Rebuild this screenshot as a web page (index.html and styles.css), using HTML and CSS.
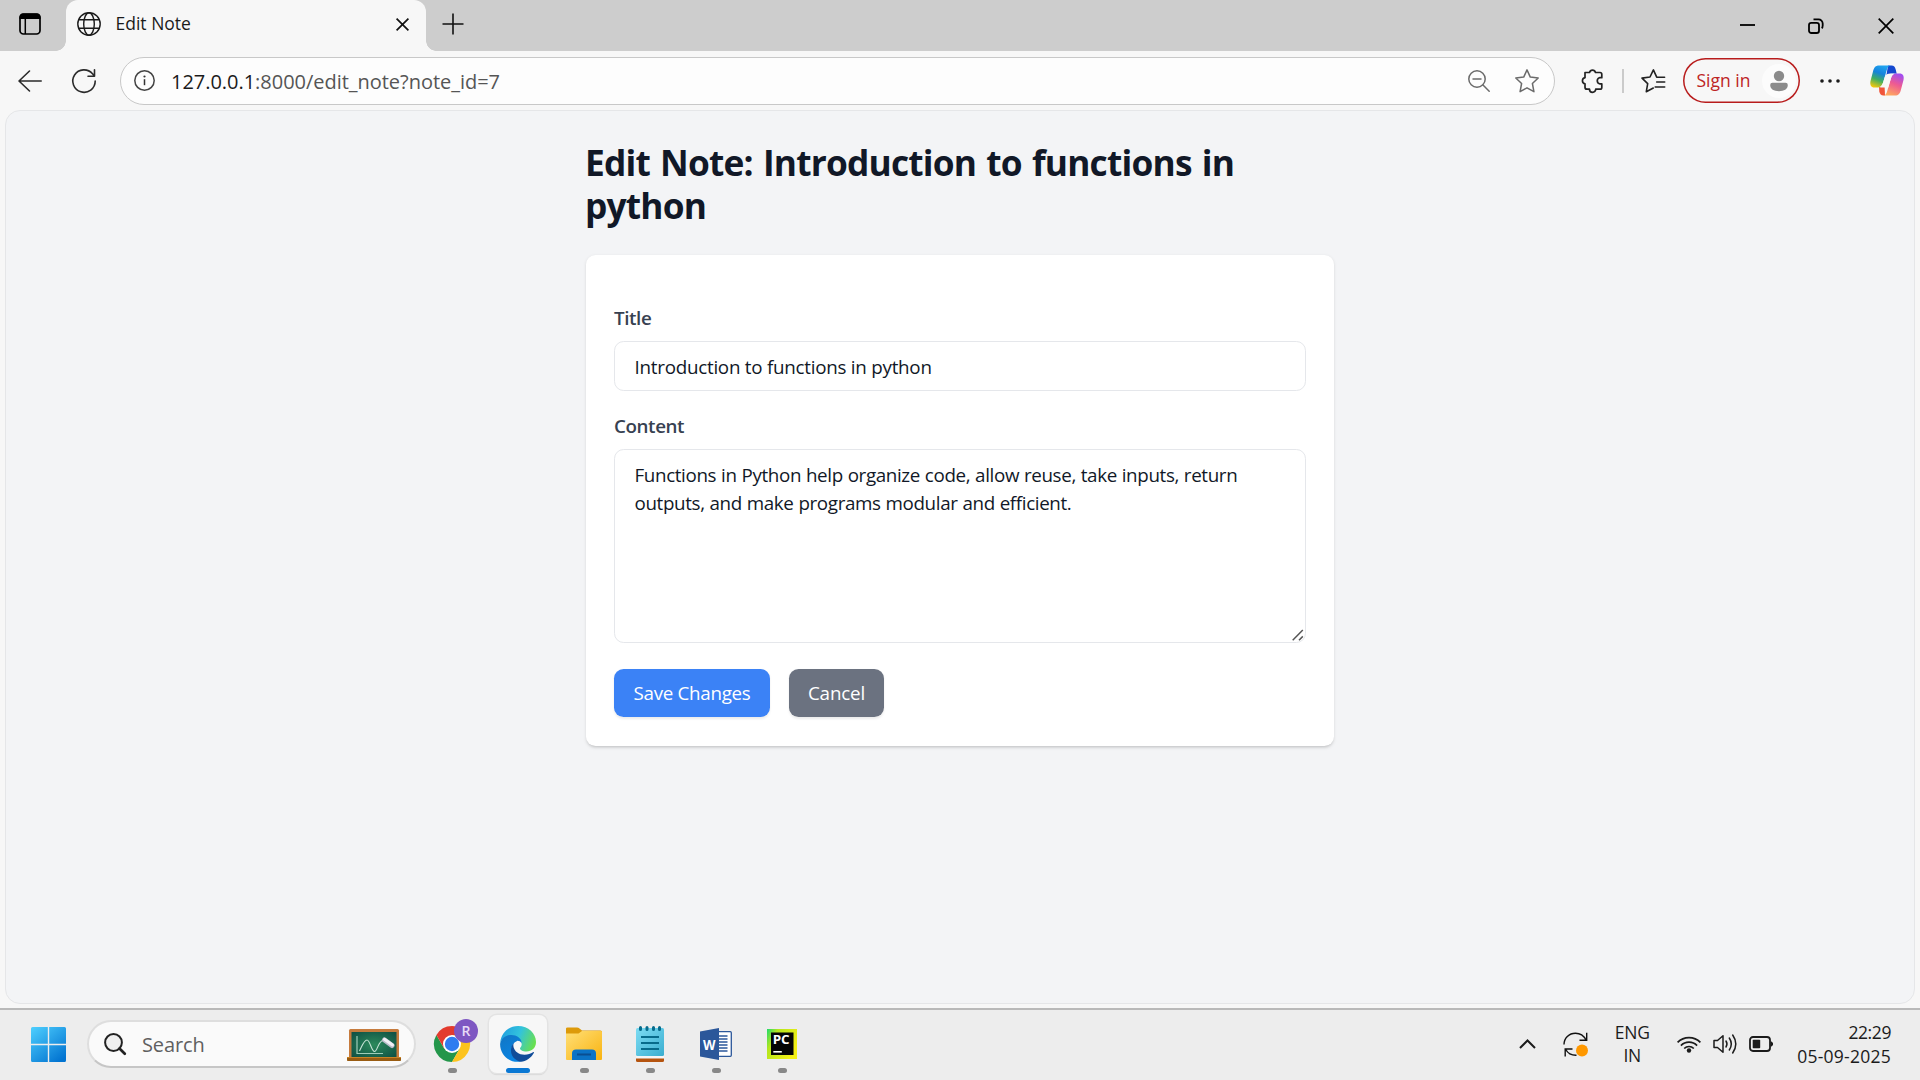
FILE: index.html
```html
<!DOCTYPE html>
<html lang="en">
<head>
<meta charset="utf-8">
<title>Edit Note</title>
<link rel="stylesheet" href="styles.css">
</head>
<body>
<header class="tabstrip">
  <svg class="tab-menu" width="22" height="22" viewBox="0 0 22 22"><rect x="1" y="1" width="20" height="20" rx="3.5" fill="none" stroke="#000" stroke-width="1.7"/><path d="M.6 6V4A3.5 3.5 0 0 1 4 .5h14A3.5 3.5 0 0 1 21.500 4v2z"/><path d="M6.300 5v16" stroke="#000" stroke-width="1.500"/></svg>
  <div class="tab">
    <svg class="globe" width="24" height="24" viewBox="0 0 24 24" fill="none" stroke="#1b1b1b" stroke-width="1.400"><circle cx="12" cy="12" r="11.200"/><ellipse cx="12" cy="12" rx="5.300" ry="11.200"/><path d="M1.800 7.700h20.400M1.800 16.300h20.400"/></svg>
    <span class="tab-title">Edit Note</span>
    <svg class="tab-close" width="13" height="13" viewBox="0 0 13 13" stroke="#111" stroke-width="1.700"><path d="M.6.6l11.800 11.800M12.400.6.6 12.400"/></svg>
  </div>
  <svg class="tab-new" width="22" height="22" viewBox="0 0 22 22" stroke="#111" stroke-width="1.600"><path d="M11 .5v21M.5 11h21"/></svg>
  <div class="window-buttons">
    <svg width="15" height="15" viewBox="0 0 15 15"><path d="M0 7h15" stroke="#000" stroke-width="1.800"/></svg>
    <svg width="16" height="16" viewBox="0 0 16 16" fill="none" stroke="#000" stroke-width="1.800"><rect x="1" y="4.800" width="10" height="10.200" rx="2.300"/><path d="M5.500 1.300H10.500A4.200 4.200 0 0 1 14.700 5.500V7.500Q14.700 9.500 13.700 10.300"/></svg>
    <svg width="16" height="16" viewBox="0 0 16 16"><path d="M.7.7l14.600 14.600M15.300.7.7 15.300" stroke="#000" stroke-width="1.700"/></svg>
  </div>
</header>

<nav class="toolbar">
  <svg class="back" width="24" height="22" viewBox="0 0 24 22" fill="none" stroke="#2b2b2b" stroke-width="1.600" stroke-linecap="round" stroke-linejoin="round"><path d="M11.500 1 1 11l10.500 10M1.500 11H23.200"/></svg>
  <svg class="reload" width="24" height="24" viewBox="0 0 24 24" fill="none" stroke="#2b2b2b" stroke-width="1.600" stroke-linecap="round" stroke-linejoin="round"><path d="M23.200 12A11.200 11.200 0 1 1 20.500 4.800L22.400 7M22.500.8V7.300H16"/></svg>
  <div class="address">
    <svg class="info" width="21" height="21" viewBox="0 0 21 21"><circle cx="10.500" cy="10.500" r="9.700" fill="none" stroke="#444" stroke-width="1.500"/><circle cx="10.500" cy="6.500" r="1.100" fill="#333"/><path d="M10.500 9.200v6" stroke="#333" stroke-width="1.500"/></svg>
    <span class="url"><b>127.0.0.1</b>:8000/edit_note?note_id=7</span>
    <svg class="zoom-out" width="22" height="22" viewBox="0 0 22 22" fill="none" stroke="#6b6b6b" stroke-width="1.500" stroke-linecap="round"><circle cx="9" cy="9" r="8.200"/><path d="M5 9h8M15 15l6.200 6.200"/></svg>
    <svg class="star" width="24" height="24" viewBox="0 0 24 24" fill="none" stroke="#6b6b6b" stroke-width="1.500" stroke-linejoin="round"><path d="M12 .9l3.300 7.200 7.900.9-5.800 5.500 1.500 8.200L12 18.800l-6.900 3.900 1.500-8.200L.8 9l7.900-.9z"/></svg>
  </div>
  <svg class="puzzle" width="24" height="24" viewBox="0 0 24 24" fill="none" stroke="#222" stroke-width="1.700" stroke-linejoin="round"><path d="M5 3.500H9.500A3.100 3.100 0 0 1 15.500 3.500H20Q21.800 3.500 21.800 5.500V8.700H19.500A3.200 3.200 0 0 0 19.500 14.800H21.800V18.500Q21.800 20.200 20 20.200H15.700A3.100 3.100 0 0 1 9.500 20.200H7Q5 20.200 5 18.200V14.800A3.100 3.100 0 0 1 5 8.700Z"/></svg>
  <span class="divider"></span>
  <svg class="favorites" width="25" height="24" viewBox="0 0 25 24" fill="none" stroke="#222" stroke-width="1.600" stroke-linejoin="round" stroke-linecap="round"><path d="M23.600 8.200H15.700L12.400.9 9 8 1 9.100l5.700 5.500-1.400 8.100L12.300 19M15.700 13h8M14.200 18h9.500"/></svg>
  <div class="signin"><span>Sign in</span><svg width="34" height="34" viewBox="0 0 34 34"><circle cx="17" cy="17" r="17" fill="#fcfcfc"/><g fill="#8b8b8b"><circle cx="17" cy="12" r="5.200"/><path d="M10.500 18.700h13a2.300 2.300 0 0 1 2.300 2.300c0 4.100-3.800 6.200-8.800 6.200S8.200 25.100 8.200 21a2.300 2.300 0 0 1 2.300-2.300z"/></g></svg></div>
  <svg class="more" width="20" height="4" viewBox="0 0 20 4" fill="#1b1b1b"><circle cx="2" cy="2" r="1.800"/><circle cx="10" cy="2" r="1.800"/><circle cx="18" cy="2" r="1.800"/></svg>
  <svg class="copilot" width="34" height="31" viewBox="0 0 34 31">
    <defs>
      <linearGradient id="cpa" x1=".6" y1="0" x2=".25" y2="1"><stop offset="0" stop-color="#1fa4f0"/><stop offset=".35" stop-color="#1583dc"/><stop offset=".65" stop-color="#3fae62"/><stop offset="1" stop-color="#f2c70c"/></linearGradient>
      <linearGradient id="cpb" x1=".7" y1="0" x2=".3" y2="1"><stop offset="0" stop-color="#a24df0"/><stop offset=".45" stop-color="#ee5a92"/><stop offset="1" stop-color="#ffab5c"/></linearGradient>
    </defs>
    <path d="M18 .5h3.500c2.500 0 3.500 1.500 4.200 4l1 4.200h-5.200c-3 0-4.500 1-5.500 4z" fill="#1448cf"/>
    <path d="M9 22l5.500-3 .5 11.500h-1.500c-2.500 0-3.500-1.500-4.200-3.800z" fill="#f0553a"/>
    <path d="M9 .5h12c-2.500 0-3.500 2-4.300 4.800l-3.600 12.200c-1 3.300-2.300 5-5.300 5H4.500C1 22.500-.3 19.800.5 16L3 6.500C4 2.500 5.500.5 9 .5z" fill="url(#cpa)"/>
    <path d="M25 30.500H13c2.500 0 3.500-2 4.300-4.800L20.900 13.500c1-3.300 2.300-5 5.300-5h3.300c3.500 0 4.800 2.700 4 6.500L31 24.500c-1 4-2.500 6-6 6z" fill="url(#cpb)"/>
    <path d="M20.500 8.500h5.700c-3 0-4.300 1.700-5.300 5l-2.600 9h-5.500c-1.500 0-2.500 0-3.300-.6 1.700-.6 2.700-2.100 3.600-4.400l1.700-5.500c.9-2.500 2.700-3.500 5.700-3.500z" fill="#f7f7f7"/>
  </svg>
</nav>

<main class="viewport">
  <div class="container">
    <h1>Edit Note: Introduction to functions in python</h1>
    <form class="card">
      <label for="title">Title</label>
      <input id="title" type="text" value="Introduction to functions in python">
      <label for="content">Content</label>
      <div class="area">
        <textarea id="content" spellcheck="false">Functions in Python help organize code, allow reuse, take inputs, return outputs, and make programs modular and efficient.</textarea>
        <svg class="grip" width="12" height="12" viewBox="0 0 12 12" stroke="#555" stroke-width="1.500"><path d="M.7 11.200 10.800 1M7 11.200 10.800 7.400"/></svg>
      </div>
      <div class="actions">
        <button type="button" class="btn save">Save Changes</button>
        <button type="button" class="btn cancel">Cancel</button>
      </div>
    </form>
  </div>
</main>

<footer class="taskbar">
  <svg class="start" width="35" height="35" viewBox="0 0 35 35">
    <defs><linearGradient id="win" gradientUnits="userSpaceOnUse" x1="0" y1="0" x2="28" y2="35"><stop offset="0" stop-color="#4fd0ff"/><stop offset="1" stop-color="#0274d1"/></linearGradient></defs>
    <path fill="url(#win)" d="M1.500 0H16.800V16.800H0V1.500Q0 0 1.500 0zM18.200 0H33.500Q35 0 35 1.500V16.800H18.200zM0 18.200H16.800V35H1.500Q0 35 0 33.500zM18.200 18.200H35V33.500Q35 35 33.500 35H18.200z"/>
  </svg>
  <div class="search">
    <svg class="mag" width="23" height="23" viewBox="0 0 23 23" stroke="#222" fill="none"><circle cx="9.500" cy="9.500" r="8.400" fill="#f0f0f0" stroke-width="2"/><path d="M15.500 15.500l5.300 5.300" stroke-width="2.700" stroke-linecap="round"/></svg>
    <span>Search</span>
    <svg class="board" width="54" height="32" viewBox="0 0 54 32">
      <defs><radialGradient id="chalk" cx=".5" cy=".5" r=".65"><stop offset="0" stop-color="#2b8a5c"/><stop offset="1" stop-color="#115245"/></radialGradient></defs>
      <rect x="2" width="50" height="30" rx="1.500" fill="#c67b3d"/><rect x="4.500" y="3" width="45" height="25.500" fill="url(#chalk)"/>
      <path d="M10 7v17.500h26" fill="none" stroke="#9fcdb9" stroke-width="1.200"/><path d="M12.500 22c3-6 4.500-11 7.500-11s4.500 11.500 7.500 11.500S31 12 36 11.500" fill="none" stroke="#c6e3d6" stroke-width="1.100"/>
      <path d="M37.500 11l7.500 5.500" stroke="#b9bcc9" stroke-width="5" stroke-linecap="round"/><path d="M37.500 10.300l8 5.700" stroke="#f1f1f6" stroke-width="3" stroke-linecap="round"/>
      <rect y="28" width="54" height="4" rx=".8" fill="#995c12"/><path d="M0 28.500h54" stroke="#c98324"/>
    </svg>
  </div>

  <div class="apps">
    <div class="app">
      <svg width="36" height="36" viewBox="0 0 36 36"><path d="M18 18 2.400 9A18 18 0 0 1 33.600 9z" fill="#e33b2e"/><path d="M2.400 9A18 18 0 0 0 18 36L25.800 22.500 10.200 22.500z" fill="#23964a"/><path d="M33.600 9A18 18 0 0 1 18 36L25.800 22.500 18 9z" fill="#fcc31e"/><path d="M2.400 9 10.200 22.500 18 9z" fill="#e33b2e"/><circle cx="18" cy="18" r="9" fill="#fff"/><circle cx="18" cy="18" r="7.200" fill="#2f7cf0"/></svg>
      <span class="profile">R</span>
      <i></i>
    </div>
    <div class="app active">
      <svg width="36" height="36" viewBox="0 0 36 36">
        <defs>
          <linearGradient id="eg1" x1="0" y1=".3" x2="1" y2=".6"><stop offset="0" stop-color="#1f9fe0"/><stop offset=".5" stop-color="#33c3dc"/><stop offset="1" stop-color="#6ae04d"/></linearGradient>
          <linearGradient id="eg2" x1="0" y1="0" x2=".5" y2="1"><stop offset="0" stop-color="#1276c4"/><stop offset="1" stop-color="#0a84e2"/></linearGradient>
        </defs>
        <path d="M.2 17C1 7 8.500 0 18 0c10.500 0 18 7.500 18 16 0 6-4.500 9.500-9.500 9.500-4 0-6.500-1.500-6.500-3 0-1 1.700-1.700 1.700-4.300 0-4.500-4.700-8.200-10.500-8.200C5.500 10 1.500 13 .2 17z" fill="url(#eg1)"/>
        <path d="M.1 18C1 12.500 5.500 9 11.500 9c5 0 10.200 3 10.200 8.500-1-2-2.500-2.700-4.200-2.700-5 2-6.500 6.500-5.500 11 1 5 5 9 9.500 9.600C10 38 0 29 .1 18z" fill="url(#eg2)"/>
        <path d="M17 14.800c-3 1-4.200 3.200-3.500 6.200 1 4.500 5.500 7.700 11 7.700 3.500 0 6-1 8.500-2.500.8-.4 1.200.1.8.8C30.500 32.500 26 35.500 21 35.700c-6-1-10.300-6-10-12 .2-4 2.500-7.500 6-8.900z" fill="#104c99"/>
      </svg>
      <i></i>
    </div>
    <div class="app">
      <svg width="36" height="34" viewBox="0 0 36 34"><defs><linearGradient id="fo" x1="0" y1="0" x2="1" y2="1"><stop offset="0" stop-color="#ffdf77"/><stop offset="1" stop-color="#f9b310"/></linearGradient></defs><path d="M0 8V1.500Q0 .5 1.500.5H11q1.500 0 2.500 1L16 3.500h18.500Q36 3.500 36 5v3z" fill="#dd9a0a"/><path d="M0 6.500h12.500L16 4h19q1 0 1 1v27q0 1-1 1H1q-1 0-1-1z" fill="url(#fo)"/><path d="M6 33v-6.500Q6 22.500 10 22.500H26q4 0 4 4V33z" fill="#0b73c6"/><path d="M11 27.500h14" stroke="#0a4e91" stroke-width="2"/></svg>
      <i></i>
    </div>
    <div class="app">
      <svg width="28" height="36" viewBox="0 0 28 36"><defs><linearGradient id="np" x1="0" y1="0" x2="1" y2="1"><stop offset="0" stop-color="#7ddcf3"/><stop offset="1" stop-color="#3aaed0"/></linearGradient></defs><rect y="27" width="28" height="9" rx="1.500" fill="#b5540f"/><rect y="26" width="28" height="6.500" fill="#f5f5f5"/><rect y="2" width="28" height="28" rx="1.500" fill="url(#np)"/><path d="M5 11h18M5 17h18M5 23h18" stroke="#076b8b" stroke-width="2"/><path d="M4.500 1.500v2M11 1.500v2M17.500 1.500v2M23.500 1.500v2" stroke="#076b8b" stroke-width="3" stroke-linecap="round"/></svg>
      <i></i>
    </div>
    <div class="app">
      <svg width="32" height="32" viewBox="0 0 32 32"><rect x="16" y="3.700" width="15.300" height="24.600" rx="1" fill="#fff" stroke="#2b579a" stroke-width="1.300"/><path d="M19 8h8.500M19 11h8.500M19 14h8.500M19 17h8.500M19 20h8.500M19 23h8.500" stroke="#2b579a" stroke-width="1.300"/><path d="M0 3.500 19 0v32L0 28.500z" fill="#2b579a"/><text x="9.300" y="21.700" class="glyph" font-size="15" text-anchor="middle" textLength="12.500" lengthAdjust="spacingAndGlyphs">W</text></svg>
      <i></i>
    </div>
    <div class="app">
      <svg width="30" height="30" viewBox="0 0 30 30"><defs><linearGradient id="pc" x1="0" y1="0" x2="1" y2=".5"><stop offset="0" stop-color="#1edb6d"/><stop offset=".3" stop-color="#b5e61d"/><stop offset="1" stop-color="#f3ef16"/></linearGradient></defs><rect width="30" height="30" fill="url(#pc)"/><rect x="4" y="3.500" width="22.500" height="22.500" fill="#050505"/><text x="14.200" y="15" class="glyph" font-size="12" text-anchor="middle" textLength="17" lengthAdjust="spacingAndGlyphs">PC</text><path d="M6.300 22.800h8.500" stroke="#fff" stroke-width="1.600"/></svg>
      <i></i>
    </div>
  </div>

  <div class="tray">
    <svg width="17" height="10" viewBox="0 0 17 10" fill="none" stroke="#1b1b1b" stroke-width="2"><path d="M1 9 8.500 1.500 16 9"/></svg>
    <svg class="sync" width="26" height="25" viewBox="0 0 26 25" fill="none" stroke="#111" stroke-width="1.400"><path d="M1 12.500C1 6 6 1.200 12.500 1.200 17.500 1.200 21 4 23 8M23.700.8V8.200H16.500M2.200 24.500V17H9.500M2.700 17.500C5 21.500 9 23.500 13.500 23.300"/><circle cx="19" cy="18.500" r="6" fill="#ff9800" stroke="none"/></svg>
    <div class="lang">ENG<br><span>IN</span></div>
    <svg class="wifi" width="24" height="18" viewBox="0 0 24 18" fill="none" stroke="#1b1b1b" stroke-width="1.700"><path d="M.6 7.300a16 16 0 0 1 22.800 0M3.900 10.600a11.400 11.400 0 0 1 16.200 0M7.200 13.500a6.800 6.800 0 0 1 9.600 0"/><circle cx="12" cy="15.500" r="2.200" fill="#1b1b1b" stroke="none"/></svg>
    <svg class="volume" width="24" height="20" viewBox="0 0 24 20" fill="none" stroke="#1b1b1b" stroke-width="1.500" stroke-linejoin="round" stroke-linecap="round"><path d="M1 6.500H4.500L10 1.700V18.300L4.500 13.500H1zM13 7q2 3 0 6M16.300 4q4 6 0 12M19.700 1q6.200 9 0 18"/></svg>
    <svg class="battery" width="25" height="16" viewBox="0 0 25 16"><rect x="1" y="1" width="20" height="14" rx="3" fill="none" stroke="#1b1b1b" stroke-width="1.800"/><rect x="3.700" y="3.800" width="7.500" height="8.400" rx=".8" fill="#1b1b1b"/><path d="M21.500 5.500h1l1.500 1.500v2l-1.500 1.500h-1z" fill="#1b1b1b"/></svg>
    <div class="clock"><span class="time">22:29</span><br>05-09-2025</div>
  </div>
</footer>
</body>
</html>
```
FILE: styles.css
```css
* { box-sizing: border-box; }
body {
  margin: 0;
  width: 1920px;
  height: 1080px;
  overflow: hidden;
  display: flex;
  flex-direction: column;
  background: #f7f7f7;
  font-family: "Open Sans", "Noto Sans", sans-serif;
}
svg { display: block; flex: none; overflow: visible; }

/* Tab strip */
.tabstrip { display: flex; height: 51px; background: #cdcdcd; align-items: flex-start; }
.tab-menu { margin: 13px 25px 0 19px; }
.tab {
  position: relative;
  display: flex;
  width: 360px;
  height: 51px;
  padding: 0 17px 0 11px;
  border-radius: 12px 12px 0 0;
  background: #f7f7f7;
}
.tab::before, .tab::after {
  content: "";
  position: absolute;
  bottom: 0;
  width: 10px;
  height: 10px;
}
.tab::before { left: -10px; background: radial-gradient(circle at 0 0, transparent 9.5px, #f7f7f7 10px); }
.tab::after { right: -10px; background: radial-gradient(circle at 100% 0, transparent 9.5px, #f7f7f7 10px); }
.globe { margin-top: 12px; }
.tab-title { flex: 1; margin: 11px 0 0 14.5px; font-size: 17.5px; line-height: 24px; color: #1b1b1b; }
.tab-close { margin-top: 18px; }
.tab-new { margin: 12.5px 0 0 15.5px; }
.window-buttons { display: flex; align-items: center; gap: 53.5px; margin: 17.5px 26.5px 0 auto; }

/* Toolbar */
.toolbar { display: flex; flex: none; height: 59px; align-items: center; padding-left: 18px; }
.reload { margin-left: 30px; }
.address {
  display: flex;
  align-items: center;
  width: 1435px;
  height: 48px;
  margin-left: 24px;
  padding: 0 15px 0 12.5px;
  border: 1px solid #c8c8c8;
  border-radius: 24px;
  background: #fdfdfd;
}
.url { flex: 1; margin: 1px 0 0 16.5px; font-size: 20px; letter-spacing: -0.03px; color: #555; }
.url b { font-weight: 400; color: #1b1b1b; }
.star { margin-left: 25px; }
.puzzle { margin-left: 25px; }
.divider { width: 2px; height: 24px; margin-left: 18px; background: #cbcbcb; }
.favorites { margin-left: 16.5px; }
.signin {
  display: flex;
  align-items: center;
  justify-content: space-between;
  width: 117px;
  height: 45px;
  margin-left: 17.5px;
  padding: 0 4px 0 13.5px;
  border-radius: 23px;
  box-shadow: inset 0 0 0 1.5px #b81c1c;
  font-size: 17.5px;
  color: #bd2424;
}
.signin span { margin-top: -1px; }
.more { margin-left: 20px; }
.copilot { margin-left: 30px; }

/* Page */
.viewport {
  flex: none;
  width: 1910px;
  height: 894px;
  margin-left: 5px;
  padding-top: 30px;
  border: 1px solid #e5e6e8;
  border-radius: 15px;
  background: #f3f4f6;
}
.container { width: 748px; margin: 0 auto; }
h1 {
  margin: 0 0 27.600px -1px;
  font-size: 35.300px;
  line-height: 43.200px;
  font-weight: 700;
  letter-spacing: -0.8px;
  word-spacing: 1.7px;
  color: #111827;
}
.card {
  display: flex;
  flex-direction: column;
  height: 491px;
  padding: 49px 28px 0;
  border-radius: 9.600px;
  background: #fff;
  box-shadow: 0 1.200px 3.600px rgba(0, 0, 0, .1), 0 1.200px 2.400px -1px rgba(0, 0, 0, .1);
}
label {
  height: 29px;
  margin-bottom: 8px;
  font-size: 18.800px;
  line-height: 29px;
  font-weight: 600;
  letter-spacing: -0.400px;
  color: #374151;
}
input, textarea {
  display: block;
  width: 100%;
  margin: 0;
  border: 1px solid #e5e7eb;
  border-radius: 9.600px;
  background: #fff;
  font-family: inherit;
  font-size: 18.800px;
  line-height: 28.800px;
  color: #111827;
  outline: none;
}
input { flex: none; height: 50px; margin-bottom: 21px; padding: 1px 19.500px 0; letter-spacing: -0.25px; }
.area { position: relative; height: 194px; }
textarea { height: 194px; padding: 11px 19.500px; line-height: 28px; resize: none; letter-spacing: -0.36px; word-spacing: .35px; overflow: hidden; }
.grip { position: absolute; right: 2px; bottom: 2px; }
.actions { display: flex; gap: 19px; margin-top: 26px; }
.btn {
  height: 48px;
  padding: 0;
  border: 0;
  border-radius: 9.600px;
  font-family: inherit;
  font-size: 18.800px;
  color: #fff;
  box-shadow: 0 1.200px 2.400px rgba(0, 0, 0, .08);
}
.save { width: 156px; background: #3b82f6; letter-spacing: -0.3px; }
.cancel { width: 95px; background: #6b7280; letter-spacing: -0.165px; }

/* Taskbar */
.taskbar {
  display: flex;
  flex: none;
  align-items: center;
  height: 72px;
  margin-top: 4px;
  border-top: 2px solid #b9b9b9;
  background: #ededed;
}
.start { margin: -1px 0 0 31px; }
.search {
  display: flex;
  align-items: center;
  width: 329px;
  height: 48px;
  margin: -2px 0 0 20.5px;
  padding: 0 13px 0 15.5px;
  border: 2px solid #dedede;
  border-bottom-color: #c6c6c6;
  border-radius: 24px;
  background: #fafafa;
  font-size: 20px;
  letter-spacing: -0.113px;
  color: #5f5f5f;
}
.search span { flex: 1; margin-left: 15px; }
.board { margin-top: 2px; }
.apps { display: flex; align-self: stretch; margin-left: 3.5px; }
.app {
  position: relative;
  display: flex;
  align-items: center;
  justify-content: center;
  width: 58px;
  height: 58px;
  margin: 5px 4px 0;
  border-radius: 8px;
}
.app i {
  position: absolute;
  left: 24.500px;
  bottom: 0;
  width: 9px;
  height: 5px;
  border-radius: 3px;
  background: #888;
}
.app.active { background: #f7f7f7; box-shadow: 0 0 0 1.500px #e3e3e3, 0 2px 1px #d2d2d2; }
.app.active i { left: 17px; width: 24px; background: #0a78d4; }
.profile {
  position: absolute;
  left: 31px;
  top: 4px;
  width: 24px;
  height: 24px;
  border-radius: 50%;
  background: #7e57c2;
  font-size: 14px;
  font-weight: 600;
  line-height: 24px;
  text-align: center;
  color: #e8dcf7;
}
.glyph { fill: #fff; font-family: "Open Sans", sans-serif; font-weight: 700; }
.tray { display: flex; align-items: center; margin: -2px 29px 0 auto; color: #1b1b1b; font-size: 17.500px; }
.sync { margin-left: 27px; }
.lang { width: 36px; margin: 0 0 0 25px; line-height: 22.700px; text-align: center; letter-spacing: -0.2px; white-space: nowrap; }
.wifi { margin-left: 27px; }
.volume { margin-left: 12px; }
.battery { margin-left: 12px; }
.clock { margin: -1px 0 0 23px; line-height: 24px; text-align: right; letter-spacing: 0.244px; white-space: nowrap; }
.time { letter-spacing: -0.4px; }
```
